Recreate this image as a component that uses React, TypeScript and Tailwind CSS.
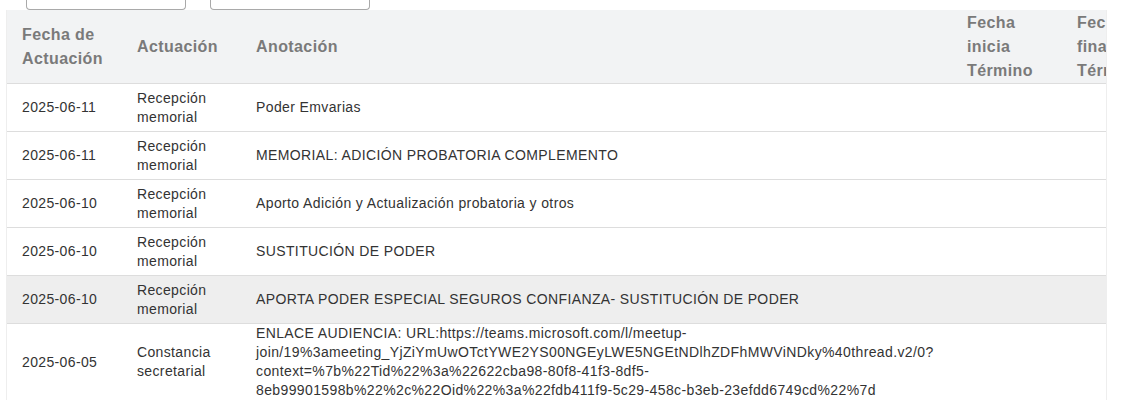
import React from "react";

interface Actuacion {
  fecha: string;
  actuacion: string;
  anotacion: string[];
  inicia: string;
  final: string;
  hover?: boolean;
}

const rows: Actuacion[] = [
  { fecha: "2025-06-11", actuacion: "Recepción memorial", anotacion: ["Poder Emvarias"], inicia: "", final: "" },
  { fecha: "2025-06-11", actuacion: "Recepción memorial", anotacion: ["MEMORIAL: ADICIÓN PROBATORIA COMPLEMENTO"], inicia: "", final: "" },
  { fecha: "2025-06-10", actuacion: "Recepción memorial", anotacion: ["Aporto Adición y Actualización probatoria y otros"], inicia: "", final: "" },
  { fecha: "2025-06-10", actuacion: "Recepción memorial", anotacion: ["SUSTITUCIÓN DE PODER"], inicia: "", final: "" },
  {
    fecha: "2025-06-10",
    actuacion: "Recepción memorial",
    anotacion: ["APORTA PODER ESPECIAL SEGUROS CONFIANZA- SUSTITUCIÓN DE PODER"],
    inicia: "",
    final: "",
    hover: true,
  },
  {
    fecha: "2025-06-05",
    actuacion: "Constancia secretarial",
    anotacion: [
      "ENLACE AUDIENCIA: URL:https://teams.microsoft.com/l/meetup-",
      "join/19%3ameeting_YjZiYmUwOTctYWE2YS00NGEyLWE5NGEtNDlhZDFhMWViNDky%40thread.v2/0?",
      "context=%7b%22Tid%22%3a%22622cba98-80f8-41f3-8df5-",
      "8eb99901598b%22%2c%22Oid%22%3a%22fdb411f9-5c29-458c-b3eb-23efdd6749cd%22%7d",
    ],
    inicia: "",
    final: "",
  },
];

export default function App() {
  return (
    <div className="min-h-screen bg-white font-['Liberation_Sans',Arial,sans-serif]">
      {/* bottoms of the filter inputs above the table */}
      <div className="flex h-[10px] items-end">
        <div className="ml-[26px] h-[10px] w-[160px] rounded-b-[4px] border-x border-b border-[#a9a9a9]" />
        <div className="ml-[24px] h-[10px] w-[160px] rounded-b-[4px] border-x border-b border-[#a9a9a9]" />
      </div>

      <div className="ml-[6px] w-[1101px] overflow-hidden border-x border-[#eeeeee]">
        <table className="w-[1165px] table-fixed border-separate border-spacing-0">
          <colgroup>
            <col className="w-[115px]" />
            <col className="w-[119px]" />
            <col className="w-[711px]" />
            <col className="w-[110px]" />
            <col className="w-[110px]" />
          </colgroup>
          <thead>
            <tr className="bg-[#f2f3f4]">
              <th className="h-[73px] px-[15px] text-left align-middle text-[16px] font-bold leading-[24px] tracking-[0.4px] text-[#7a7a7a]">
                Fecha de Actuación
              </th>
              <th className="h-[73px] px-[15px] text-left align-middle text-[16px] font-bold leading-[24px] tracking-[0.4px] text-[#7a7a7a]">
                Actuación
              </th>
              <th className="h-[73px] px-[15px] text-left align-middle text-[16px] font-bold leading-[24px] tracking-[0.4px] text-[#7a7a7a]">
                Anotación
              </th>
              <th className="h-[73px] px-[15px] text-left align-middle text-[16px] font-bold leading-[24px] tracking-[0.4px] text-[#7a7a7a]">
                Fecha inicia Término
              </th>
              <th className="h-[73px] px-[15px] text-left align-middle text-[16px] font-bold leading-[24px] tracking-[0.4px] text-[#7a7a7a]">
                Fecha finaliza Término
              </th>
            </tr>
          </thead>
          <tbody>
            {rows.map((r, i) => (
              <tr key={i} className={r.hover ? "bg-[#eeeeee]" : "bg-white"}>
                <td className="h-[48px] border-t border-[#dddddd] px-[15px] align-middle text-[14px] leading-[19px] tracking-[0.36px] text-[#333333]">
                  {r.fecha}
                </td>
                <td className="h-[48px] border-t border-[#dddddd] px-[15px] align-middle text-[14px] leading-[19px] tracking-[0.36px] text-[#333333]">
                  {r.actuacion}
                </td>
                <td className="h-[48px] border-t border-[#dddddd] px-[15px] align-middle text-[14px] leading-[19px] tracking-[0.38px] text-[#333333]">
                  {r.anotacion.map((line, j) => (
                    <div key={j} className="whitespace-nowrap">
                      {line}
                    </div>
                  ))}
                </td>
                <td className="h-[48px] border-t border-[#dddddd] px-[15px] align-middle text-[14px] leading-[19px] text-[#333333]">
                  {r.inicia}
                </td>
                <td className="h-[48px] border-t border-[#dddddd] px-[15px] align-middle text-[14px] leading-[19px] text-[#333333]">
                  {r.final}
                </td>
              </tr>
            ))}
          </tbody>
        </table>
      </div>
    </div>
  );
}
